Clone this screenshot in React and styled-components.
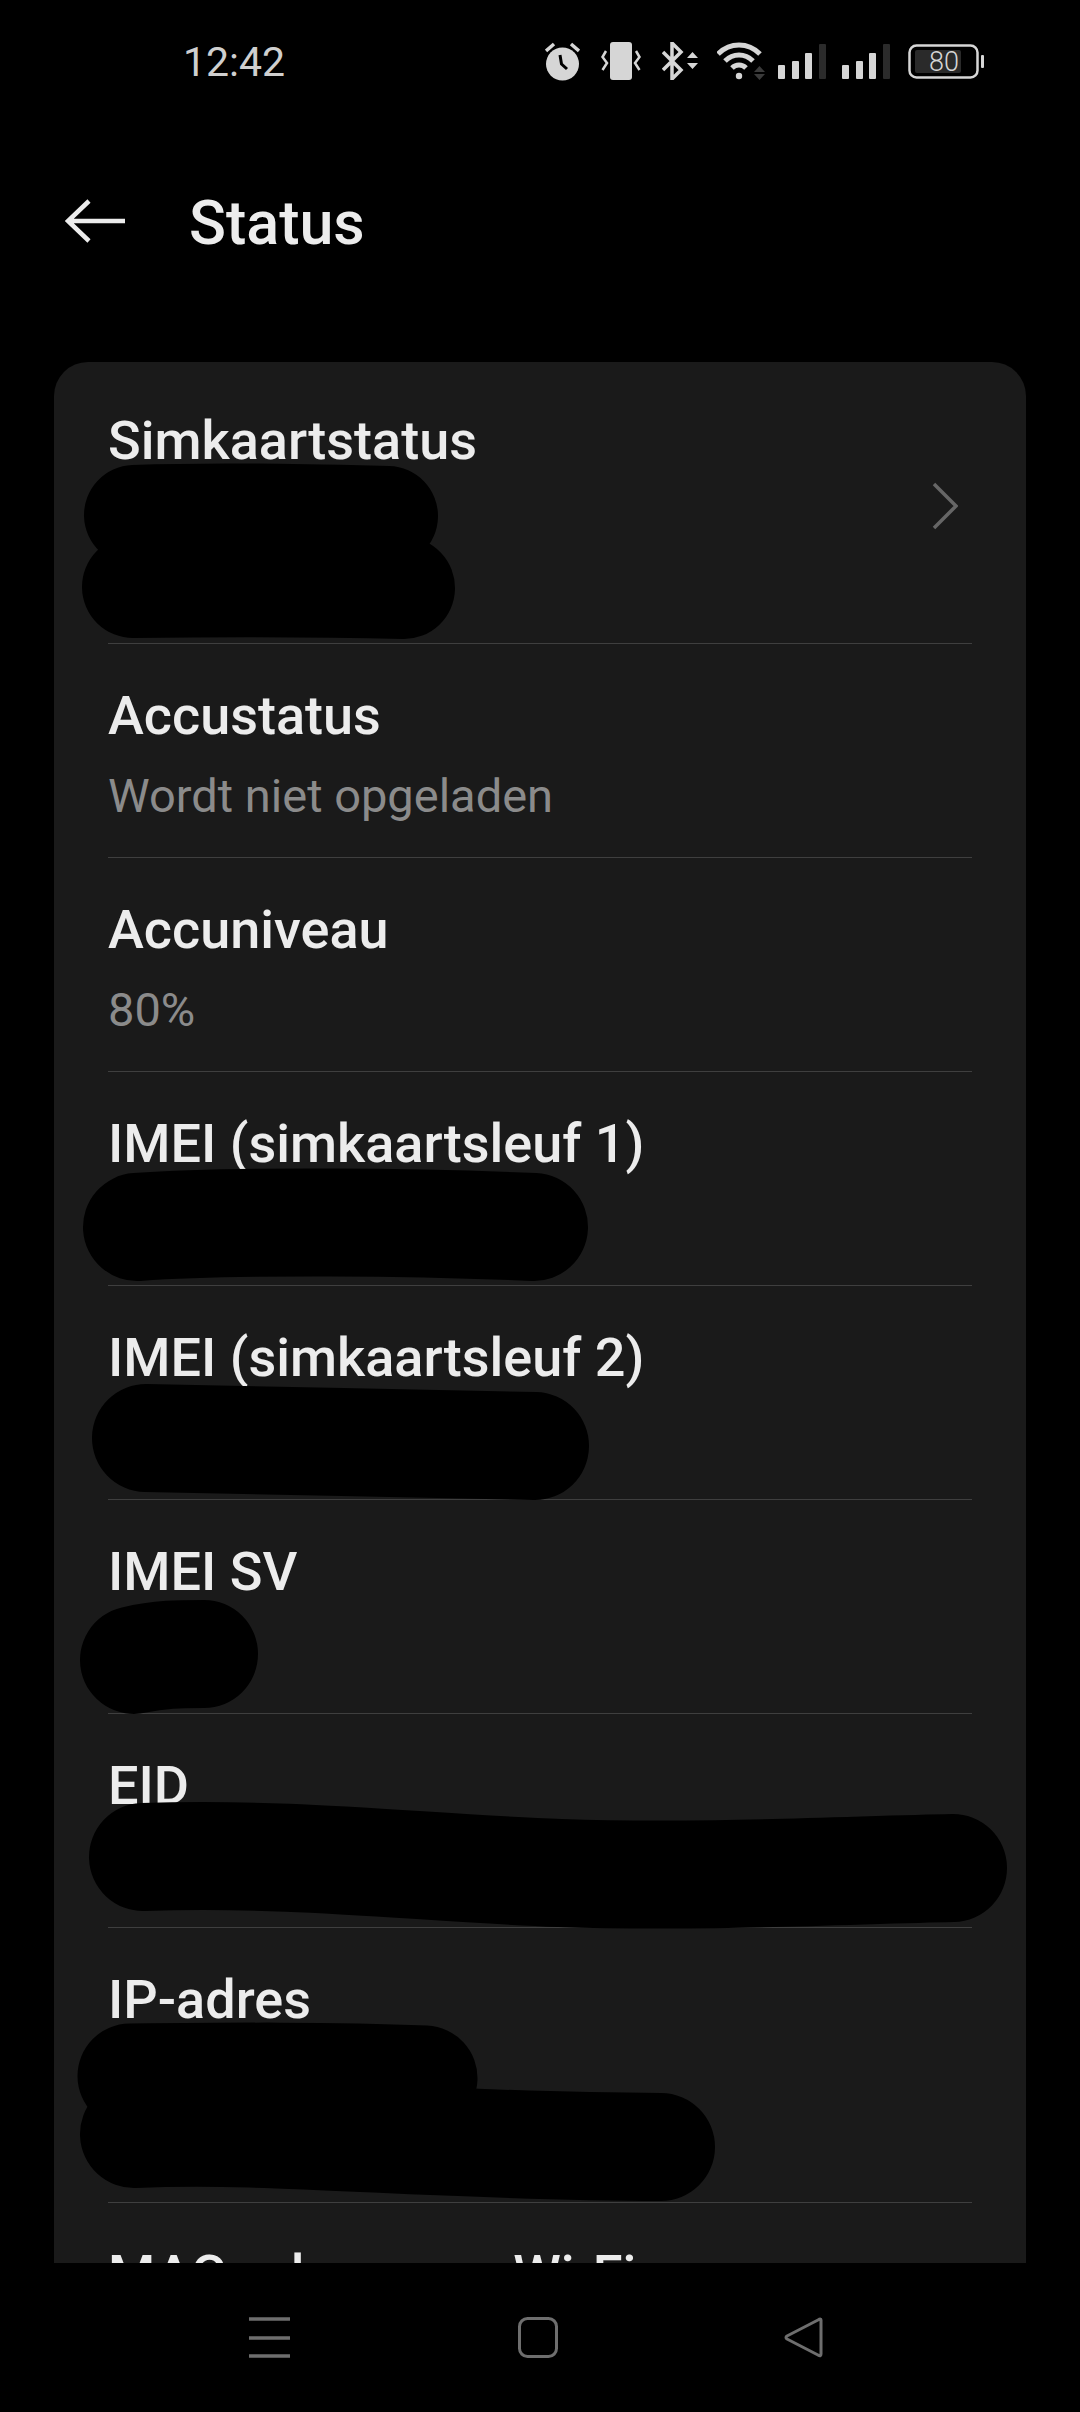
import styled, { createGlobalStyle } from "styled-components";

const GlobalStyle = createGlobalStyle`
  html, body {
    margin: 0;
    padding: 0;
    background: #000;
  }
`;

const Page = styled.div`
  position: relative;
  display: flex;
  flex-direction: column;
  width: 1080px;
  height: 2412px;
  overflow: hidden;
  background: #000;
  font-family: Roboto, "Liberation Sans", sans-serif;
`;

const StatusBar = styled.div`
  display: flex;
  align-items: center;
  height: 122px;
  padding: 0 96px 0 183px;
  flex: none;
`;

const Time = styled.span`
  margin-top: 2px;
  font-size: 41px;
  font-weight: 400;
  color: #cfcfcf;
`;

const StatusIcons = styled.div`
  display: flex;
  align-items: center;
  margin-left: auto;
`;

const Glyph = styled.svg`
  display: block;
  flex: none;
  margin-left: ${(p) => p.$gap || 0}px;
`;

const Toolbar = styled.header`
  display: flex;
  align-items: center;
  height: 240px;
  padding-left: 65px;
  padding-bottom: 42px;
  box-sizing: border-box;
  flex: none;
`;

const Title = styled.h1`
  margin: 3px 0 0 64px;
  font-size: 61px;
  font-weight: 500;
  color: #ececec;
`;

const Content = styled.main`
  flex: 1;
  min-height: 0;
  overflow: hidden;
  padding: 0 54px;
`;

const Card = styled.section`
  background: #1a1a1a;
  border-radius: 34px 34px 0 0;
  padding: 7px 54px 0;
`;

const Row = styled.div`
  display: flex;
  align-items: center;
  padding: 42px 0 31px;
  & + & {
    border-top: 1px solid #3f3f3f;
  }
`;

const RowText = styled.div`
  flex: 1;
  min-width: 0;
`;

const RowTitle = styled.div`
  margin-bottom: 19px;
  font-size: 54px;
  line-height: 60px;
  font-weight: 500;
  color: #ececec;
`;

const RowValue = styled.div`
  font-size: 47px;
  line-height: 61px;
  color: #8b8b8b;
  min-height: ${(p) => (p.$lines || 1) * 61}px;
`;

const Chevron = styled.svg`
  flex: none;
  margin: 0 14px 11px 0;
`;

const NavBar = styled.nav`
  display: grid;
  grid-template-columns: 249px 41px 228px 40px 226px 39px;
  height: 149px;
  flex: none;
  padding-top: 54px;
  box-sizing: border-box;
  & > svg:nth-child(1) { grid-column: 2; }
  & > svg:nth-child(2) { grid-column: 4; }
  & > svg:nth-child(3) { grid-column: 6; }
`;

const Redactions = styled.svg`
  position: absolute;
  top: 0;
  left: 0;
  pointer-events: none;
`;

const rows = [
  { title: "Simkaartstatus", lines: 2, chevron: true },
  { title: "Accustatus", value: "Wordt niet opgeladen" },
  { title: "Accuniveau", value: "80%" },
  { title: "IMEI (simkaartsleuf 1)" },
  { title: "IMEI (simkaartsleuf 2)" },
  { title: "IMEI SV" },
  { title: "EID" },
  { title: "IP-adres", lines: 2 },
  { title: "MAC-adres voor Wi-Fi" },
];

const scribbles = [
  { d: "M134 515 C220 512 300 514 388 516", w: 100 },
  { d: "M133 587 C220 586 320 586 404 588", w: 102 },
  { d: "M137 1227 C240 1220 420 1222 534 1227", w: 108 },
  { d: "M146 1438 C260 1440 420 1444 535 1446", w: 108 },
  { d: "M134 1660 C160 1654 180 1654 204 1654", w: 108 },
  { d: "M143 1857 C300 1852 420 1868 560 1873 S850 1870 953 1868", w: 108 },
  { d: "M130 2076 C230 2075 330 2074 425 2078", w: 105 },
  { d: "M134 2134 C280 2128 420 2146 661 2147", w: 108 },
];

function AlarmIcon() {
  return (
    <Glyph width="35" height="39" viewBox="0 0 35 39">
      <circle cx="17.5" cy="22" r="16.5" fill="#d6d6d6" />
      <path d="M15 13 L16.5 22 L22 27" fill="none" stroke="#000" strokeWidth="3" />
      <path d="M1 9 L9 2 M26 2 L34 9" stroke="#d6d6d6" strokeWidth="3.5" />
    </Glyph>
  );
}

function VibrateIcon() {
  return (
    <Glyph $gap={21} width="40" height="38" viewBox="0 0 40 38">
      <rect x="9" y="0" width="22" height="38" rx="3" fill="#d6d6d6" />
      <path
        d="M5 9 L1.5 15 L6 21 L1.5 28 M35 9 L38.5 15 L34 21 L38.5 28"
        fill="none"
        stroke="#d6d6d6"
        strokeWidth="2.5"
      />
    </Glyph>
  );
}

function BluetoothIcon() {
  return (
    <Glyph $gap={21} width="36" height="38" viewBox="0 0 36 38">
      <path
        d="M1 10 L19 28 L10 37 L10 1 L19 10 L1 28"
        fill="none"
        stroke="#d6d6d6"
        strokeWidth="3.5"
      />
      <path d="M25 16 L30.5 10 L36 16 Z M25 21 L36 21 L30.5 27 Z" fill="#d6d6d6" />
    </Glyph>
  );
}

function WifiIcon() {
  return (
    <Glyph $gap={19} width="48" height="38" viewBox="0 0 48 38">
      <g fill="none" stroke="#d6d6d6" strokeWidth="5">
        <path d="M1 12 C13 0 31 0 43 12" />
        <path d="M8 19 C16 11 28 11 36 19" />
        <path d="M15 26 C19 22 25 22 29 26" />
      </g>
      <circle cx="22" cy="34" r="3.2" fill="#d6d6d6" />
      <path d="M37 30 L42.5 24 L48 30 Z M37 32 L48 32 L42.5 38 Z" fill="#3a3a3a" />
    </Glyph>
  );
}

function SignalIcon({ gap }) {
  return (
    <Glyph $gap={gap} width="48" height="35" viewBox="0 0 48 35">
      <rect x="0" y="21" width="7" height="14" rx="1" fill="#d6d6d6" />
      <rect x="14" y="17" width="7" height="18" rx="1" fill="#d6d6d6" />
      <rect x="27" y="9" width="7" height="26" rx="1" fill="#d6d6d6" />
      <rect x="41" y="0" width="7" height="35" rx="1" fill="#2b2b2b" />
    </Glyph>
  );
}

function BatteryIcon() {
  return (
    <Glyph $gap={18} width="76" height="35" viewBox="0 0 76 35">
      <rect x="1.5" y="1.5" width="68" height="32" rx="7" fill="none" stroke="#d6d6d6" strokeWidth="2.5" />
      <rect x="7" y="6" width="46" height="23" rx="2" fill="#2a2a2a" />
      <rect x="73" y="11" width="3" height="13" rx="1" fill="#d6d6d6" />
      <text x="21" y="27" fontFamily="Roboto, sans-serif" fontSize="27" fontWeight="300" fill="#d6d6d6">
        80
      </text>
    </Glyph>
  );
}

export default function App() {
  return (
    <Page>
      <GlobalStyle />
      <StatusBar>
        <Time>12:42</Time>
        <StatusIcons>
          <AlarmIcon />
          <VibrateIcon />
          <BluetoothIcon />
          <WifiIcon />
          <SignalIcon gap={13} />
          <SignalIcon gap={16} />
          <BatteryIcon />
        </StatusIcons>
      </StatusBar>
      <Toolbar>
        <svg width="60" height="44" viewBox="0 0 60 44">
          <path d="M24 2 L3 22 L24 42 M3 22 L60 22" fill="none" stroke="#ececec" strokeWidth="4.5" />
        </svg>
        <Title>Status</Title>
      </Toolbar>
      <Content>
        <Card>
          {rows.map((row) => (
            <Row key={row.title}>
              <RowText>
                <RowTitle>{row.title}</RowTitle>
                <RowValue $lines={row.lines}>{row.value}</RowValue>
              </RowText>
              {row.chevron && (
                <Chevron width="26" height="48" viewBox="0 0 26 48">
                  <path d="M2 2 L24 24 L2 46" fill="none" stroke="#666" strokeWidth="3.5" />
                </Chevron>
              )}
            </Row>
          ))}
        </Card>
      </Content>
      <NavBar>
        <svg width="41" height="41" viewBox="0 0 41 41">
          <path d="M0 2 H41 M0 21 H41 M0 39 H41" stroke="#6e6e6e" strokeWidth="3.5" />
        </svg>
        <svg width="40" height="41" viewBox="0 0 40 41">
          <rect x="1.5" y="1.5" width="37" height="38" rx="8" fill="none" stroke="#6e6e6e" strokeWidth="3" />
        </svg>
        <svg width="39" height="41" viewBox="0 0 39 41">
          <path d="M37 3 L37 37 Q37 40 34 38 L3 22 Q1 20.5 3 19 L34 3 Q37 1 37 3 Z" fill="none" stroke="#6e6e6e" strokeWidth="3" strokeLinejoin="round" />
        </svg>
      </NavBar>
      <Redactions width="1080" height="2412" viewBox="0 0 1080 2412">
        {scribbles.map((s) => (
          <path key={s.d} d={s.d} fill="none" stroke="#000" strokeWidth={s.w} strokeLinecap="round" />
        ))}
      </Redactions>
    </Page>
  );
}
